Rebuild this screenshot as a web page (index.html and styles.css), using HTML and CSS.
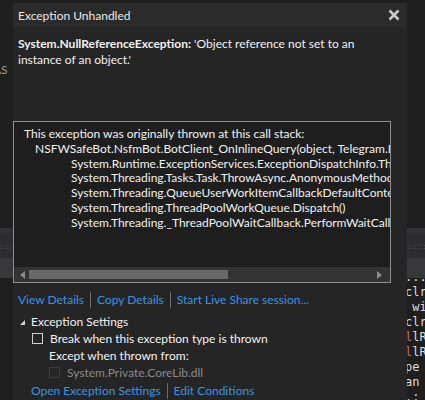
FILE: index.html
```html
<!DOCTYPE html>
<html>
<head>
<meta charset="utf-8">
<link rel="stylesheet" href="styles.css">
</head>
<body>
<div class="editor">
  <div class="editor-top"><span class="stray">AS</span></div>
  <div class="band-line"></div>
  <div class="band-grip"><span class="grip"></span></div>
  <div class="band-tab"></div>
  <pre class="code"><span>.:.</span>
<span>clr</span>
<span> wit</span>
<span>clr</span>
<span><i>l</i>lR</span>
<span><i>l</i>lR</span>
<span>pe</span>
<span>an</span>
<span>.:</span></pre>
</div>

<div class="dialog">
  <div class="titlebar">
    <span class="title">Exception Unhandled</span>
    <svg class="close" width="12" height="12" viewBox="0 0 12 12"><path d="M1.5 1.5 L10.5 10.5 M10.5 1.5 L1.5 10.5" stroke="#c8c8c8" stroke-width="2.6" fill="none"/></svg>
  </div>
  <div class="body">
    <p class="message"><b>System.NullReferenceException:</b> 'Object reference not set to an instance of an object.'</p>
    <div class="stack">
      <div class="stack-text">
        <div class="l0">This exception was originally thrown at this call stack:</div>
        <div class="l1">NSFWSafeBot.NsfmBot.BotClient_OnInlineQuery(object, Telegram.Bot.Args.InlineQueryEventArgs)</div>
        <div class="l2">System.Runtime.ExceptionServices.ExceptionDispatchInfo.Throw()</div>
        <div class="l2">System.Threading.Tasks.Task.ThrowAsync.AnonymousMethod__139_1(object)</div>
        <div class="l2">System.Threading.QueueUserWorkItemCallbackDefaultContext.Execute()</div>
        <div class="l2">System.Threading.ThreadPoolWorkQueue.Dispatch()</div>
        <div class="l2">System.Threading._ThreadPoolWaitCallback.PerformWaitCallback()</div>
      </div>
      <div class="hscroll">
        <svg class="arrow" width="5" height="8" viewBox="0 0 5 8"><path d="M5 0 L0 4 L5 8 Z" fill="#8a8a8a"/></svg>
        <div class="track"><div class="thumb"></div></div>
        <svg class="arrow" width="5" height="8" viewBox="0 0 5 8"><path d="M0 0 L5 4 L0 8 Z" fill="#8a8a8a"/></svg>
      </div>
    </div>
    <div class="links">
      <a>View Details</a><span class="sep"></span><a>Copy Details</a><span class="sep"></span><a>Start Live Share session...</a>
    </div>
    <div class="settings-head"><span class="tri"></span>Exception Settings</div>
    <div class="check-row"><span class="box"></span>Break when this exception type is thrown</div>
    <div class="except">Except when thrown from:</div>
    <div class="check-row disabled"><span class="box"></span>System.Private.CoreLib.dll</div>
    <div class="links bottom">
      <a>Open Exception Settings</a><span class="sep"></span><a>Edit Conditions</a>
    </div>
  </div>
</div>
</body>
</html>
```
FILE: styles.css
```css
html, body {
  margin: 0;
  padding: 0;
}
body {
  width: 425px;
  height: 400px;
  overflow: hidden;
  position: relative;
  background: #1e1e1e;
  font-family: "Lato", "Open Sans", sans-serif;
  font-size: 12px;
  color: #f1f1f1;
}
.editor {
  display: flex;
  flex-direction: column;
  height: 400px;
  overflow: hidden;
}
.editor > * {
  flex-shrink: 0;
}
.editor-top {
  height: 228px;
  background: #1f1f1f;
}
.stray {
  display: block;
  padding-top: 62px;
  margin-left: -7px;
  color: #9a9a9a;
  font-size: 12px;
}
.band-line {
  height: 5px;
  background: #333336;
}
.band-grip {
  height: 25px;
  background: #2d2d30;
  display: flex;
  align-items: center;
}
.grip {
  display: block;
  width: 100%;
  height: 6px;
  margin-top: 2px;
  background-image: radial-gradient(circle, #4a4a4e 0.8px, transparent 1px);
  background-size: 3px 3px;
}
.band-tab {
  height: 20px;
  background: #38383b;
  position: relative;
  z-index: 1;
}
.code {
  margin: -8px 0 0 0;
  padding-left: 405px;
  font-family: "DejaVu Sans Mono", "Liberation Mono", monospace;
  font-size: 12px;
  line-height: 15px;
  color: #dcdcdc;
  background: #1e1e1e;
}
.code i {
  font-style: normal;
  color: #d16969;
}
.dialog {
  position: absolute;
  left: 13px;
  top: 3px;
  z-index: 2;
  width: 394px;
  height: 400px;
  background: #252526;
}
.titlebar {
  height: 24px;
  background: #2b2b2c;
  display: flex;
  align-items: center;
  justify-content: space-between;
  padding: 0 7px 0 5px;
}
.title {
  color: #e8e8e8;
}
.close {
  display: block;
  margin-top: -1px;
}
.message {
  margin: 0;
  padding: 9px 28px 0 5px;
  line-height: 16px;
  height: 85px;
  color: #f1f1f1;
}
.message b {
  font-weight: 700;
}
.stack {
  width: 376px;
  height: 160px;
  border: 1px solid #8e8e8e;
  background: #1e1e1e;
  display: flex;
  flex-direction: column;
}
.stack-text {
  flex: 1;
  overflow: hidden;
  padding: 5px 0 0 10px;
  line-height: 14.8px;
  white-space: nowrap;
  color: #f1f1f1;
}
.l1 { padding-left: 11px; }
.l2 { padding-left: 47px; }
.hscroll {
  height: 15px;
  background: #333334;
  display: flex;
  align-items: center;
  padding: 0 8px 0 6px;
  gap: 4px;
}
.track {
  flex: 1;
  height: 100%;
  display: flex;
  align-items: center;
}
.thumb {
  width: 199px;
  height: 9px;
  background: #686868;
}
.links {
  display: flex;
  align-items: center;
  padding: 8px 0 0 5px;
  height: 17px;
  line-height: 17px;
}
.links a {
  color: #3794e8;
}
.sep {
  width: 1px;
  height: 16px;
  background: #6a6a6a;
  margin: 0 6px;
}
.settings-head {
  padding-left: 7px;
  margin-top: 5px;
  height: 17px;
  line-height: 17px;
  display: flex;
  align-items: center;
}
.tri {
  width: 0;
  height: 0;
  border-left: 5px solid transparent;
  border-bottom: 5px solid #d0d0d0;
  margin-right: 6px;
  margin-top: 1px;
}
.check-row {
  display: flex;
  align-items: center;
  height: 17px;
  line-height: 17px;
  padding-left: 19px;
}
.box {
  width: 9px;
  height: 9px;
  border: 1px solid #cfcfcf;
  margin-right: 7px;
}
.except {
  padding-left: 36px;
  height: 17px;
  line-height: 17px;
}
.disabled {
  padding-left: 36px;
  color: #8a8a8a;
}
.disabled .box {
  border-color: #3f3f42;
}
.links.bottom {
  padding: 1px 0 0 18px;
}
```
